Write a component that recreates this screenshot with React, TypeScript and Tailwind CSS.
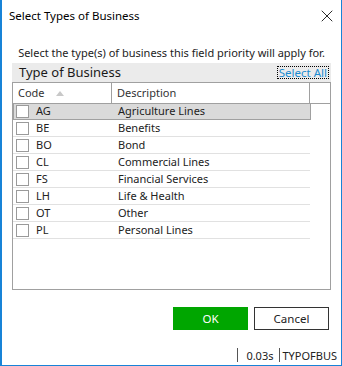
import { X } from "lucide-react";

const rows = [
  { code: "AG", desc: "Agriculture Lines" },
  { code: "BE", desc: "Benefits" },
  { code: "BO", desc: "Bond" },
  { code: "CL", desc: "Commercial Lines" },
  { code: "FS", desc: "Financial Services" },
  { code: "LH", desc: "Life & Health" },
  { code: "OT", desc: "Other" },
  { code: "PL", desc: "Personal Lines" },
];

export default function App() {
  return (
    <div className="w-[342px] h-[366px] bg-white border-l-2 border-r border-b border-[#1883d7] flex flex-col font-['Noto_Sans',sans-serif] text-[11px] text-[#1a1a1a] overflow-hidden">
      {/* Title bar */}
      <div className="h-[32px] shrink-0 flex items-center justify-between pl-[7px] pr-[4px]">
        <span className="text-[11.5px] text-black leading-none">Select Types of Business</span>
        <X className="w-[20px] h-[20px] text-black" strokeWidth={1} />
      </div>

      <div className="px-[10px] flex flex-col shrink-0">
        <p className="mt-[13px] text-center leading-[16px] text-[#222] whitespace-nowrap">
          Select the type(s) of business this field priority will apply for.
        </p>

        {/* Group header */}
        <div className="mt-[2px] h-[19px] shrink-0 bg-[#ebebeb] flex items-center justify-between pl-[7px] pr-[2px]">
          <span className="text-[13px] leading-none text-[#1a1a1a]">Type of Business</span>
          <span className="h-[13px] px-[1px] flex items-center border border-dotted border-black text-[11.5px] leading-none text-[#1c8cd0]">
            Select All
          </span>
        </div>

        {/* Grid */}
        <div className="h-[208px] shrink-0 border border-[#a0a0a0] flex flex-col">
          <div className="h-[21px] flex border-b border-[#a0a0a0] shrink-0">
            <div className="w-[99px] border-r border-[#a0a0a0] flex items-center pl-[5px] gap-[11px] text-[#333]">
              <span>Code</span>
              <svg width="8" height="5" viewBox="0 0 8 5">
                <path d="M0 5 L4 0 L8 5 Z" fill="#c8c8c8" />
              </svg>
            </div>
            <div className="w-[198px] border-r border-[#a0a0a0] flex items-center pl-[5px] text-[#333]">
              Description
            </div>
          </div>
          {rows.map((r, i) => (
            <div
              key={r.code}
              className={
                i === 0
                  ? "w-[298px] h-[17px] flex items-center bg-[#dadada] border border-[#a0a0a0] -mt-[1px] shrink-0"
                  : "w-[297px] h-[17px] flex items-center border-b border-[#e1e1e1] shrink-0"
              }
            >
              <div className={i === 0 ? "pl-[2px]" : "pl-[3px]"}>
                <div className="w-[13px] h-[13px] border border-[#9a9a9a] bg-white" />
              </div>
              <span className="w-[89px] pl-[7px] text-[#222]">{r.code}</span>
              <span className="text-[#222]">{r.desc}</span>
            </div>
          ))}
        </div>

        {/* Buttons */}
        <div className="mt-[17px] flex justify-end gap-[6px] pr-[2px]">
          <button className="w-[75px] h-[23px] bg-[#00a600] text-white text-[11.5px]">OK</button>
          <button className="w-[75px] h-[23px] border border-[#333] bg-white text-[#222] text-[11.5px]">Cancel</button>
        </div>
      </div>

      {/* Status bar */}
      <div className="mt-[18px] h-[14px] shrink-0 flex justify-end items-center pr-[4px] text-[11px] text-[#222]">
        <div className="h-[14px] border-l border-[#555] pl-[8px] pr-[6px] leading-none flex items-center">0.03s</div>
        <div className="h-[14px] border-l border-[#555] pl-[2px] leading-none flex items-center">TYPOFBUS</div>
      </div>
    </div>
  );
}
